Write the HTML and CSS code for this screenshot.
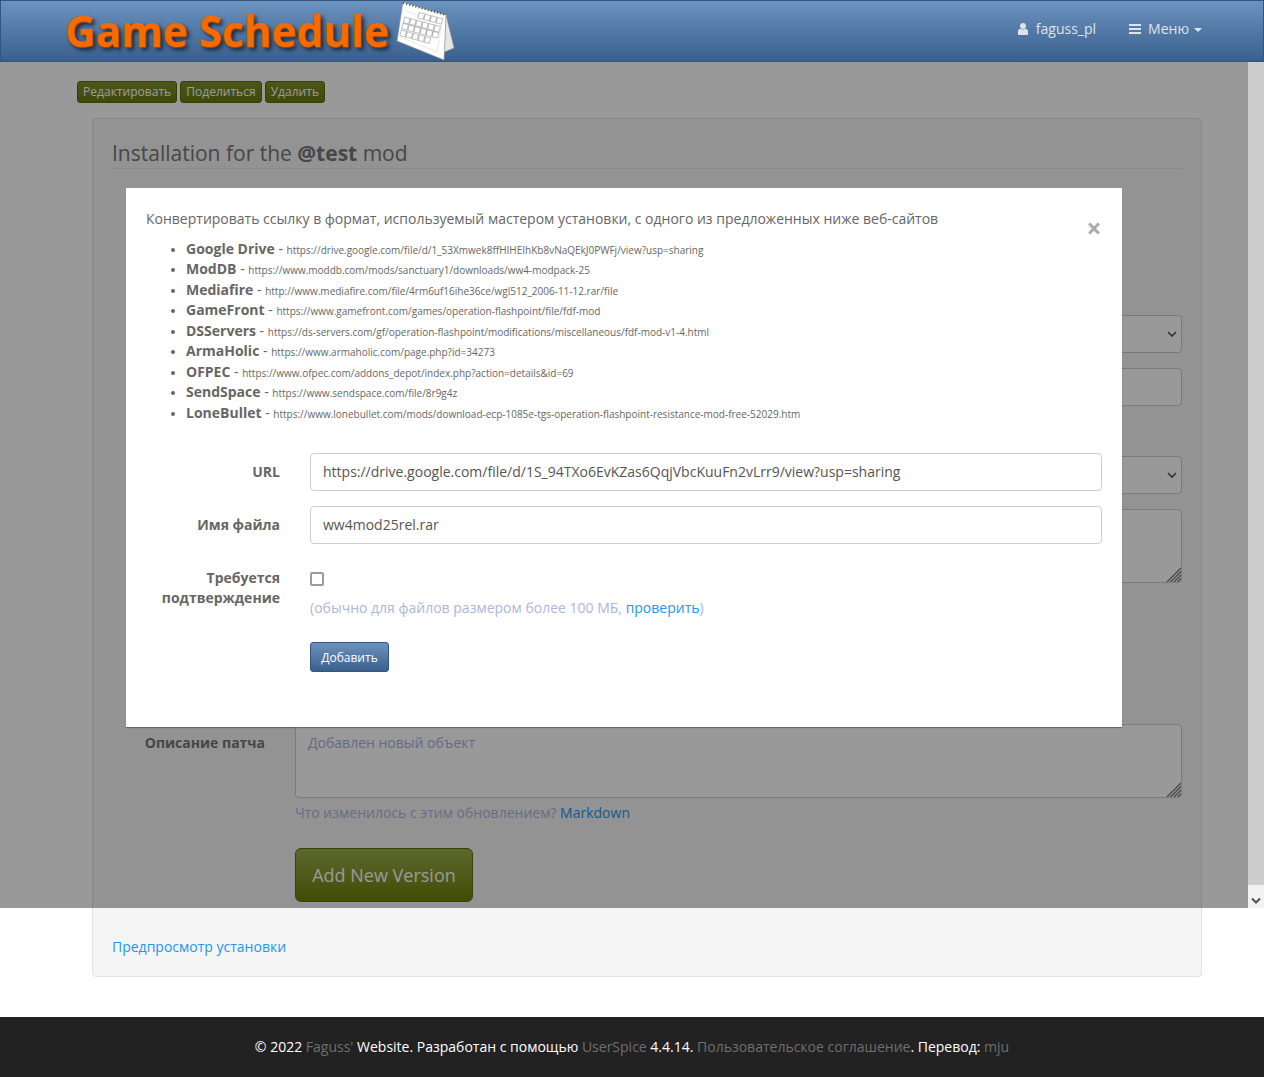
FILE: index.html
```html
<!DOCTYPE html>
<html lang="ru">
<head>
<meta charset="utf-8">
<title>Game Schedule</title>
<link rel="stylesheet" href="styles.css">
</head>
<body>
<header class="navbar">
  <a class="brand" href="#">
    <span class="brand-text">Game Schedule</span>
    <svg class="brand-cal" width="60" height="60" viewBox="0 0 60 60">
      <defs>
        <pattern id="cells" width="6.3" height="6.5" patternUnits="userSpaceOnUse">
          <rect x="0.5" y="0.5" width="5.3" height="5.5" fill="#fff" stroke="#a8a8a8" stroke-width=".7"/>
        </pattern>
      </defs>
      <path d="M50 13 L58 46 L48 50 Z" fill="#e6e6e6" stroke="#9a9a9a" stroke-width=".6"/>
      <path d="M7 0 L50 13 L48 58 L1 39 Z" fill="#fff" stroke="#8d8d8d" stroke-width=".6"/>
      <path d="M7 1 L50 13" stroke="#555" stroke-width="2" stroke-dasharray="1.200 2" fill="none"/>
      <path d="M9 9 L46 20 L41 50 L4 35" fill="none" stroke="#d0d0d0" stroke-width=".5"/>
      <rect width="25.200" height="6.500" fill="url(#cells)" transform="translate(23 10) rotate(15)"/>
      <rect width="37.800" height="13" fill="url(#cells)" transform="translate(8.500 14.500) rotate(15)"/>
      <rect width="31.500" height="6.500" fill="url(#cells)" transform="translate(5 27.500) rotate(15)"/>
    </svg>
  </a>
  <nav class="nav-right">
    <a class="nav-link" href="#">
      <svg class="nav-icon" width="10" height="12" viewBox="0 0 10 12"><circle cx="5" cy="3" r="3" fill="#dfe4ea"/><path d="M0 11 V8.500 C0 6.800 1 6 2.500 5.700 C3.800 6.700 6.200 6.700 7.500 5.700 C9 6 10 6.800 10 8.500 V11 C10 11.600 9.500 12 9 12 H1 C.5 12 0 11.600 0 11 Z" fill="#dfe4ea"/></svg>
      faguss_pl
    </a>
    <a class="nav-link nav-menu" href="#">
      <svg class="nav-icon" width="12" height="10" viewBox="0 0 12 10"><path d="M0 0H12V2H0ZM0 4H12V6H0ZM0 8H12V10H0Z" fill="#dfe4ea"/></svg>
      Меню
      <span class="caret"></span>
    </a>
  </nav>
</header>

<main class="container">
  <div class="actions">
    <a class="btn-olive" href="#">Редактировать</a>
    <a class="btn-olive" href="#">Поделиться</a>
    <a class="btn-olive" href="#">Удалить</a>
  </div>

  <section class="well">
    <h2 class="well-title">Installation for the <b>@test</b> mod</h2>

    <div class="row row-a"><div class="row-label"></div><select class="field"><option></option></select></div>
    <div class="row row-b"><div class="row-label"></div><input class="field" type="text"></div>
    <div class="row row-c"><div class="row-label"></div><select class="field"><option></option></select></div>
    <div class="row row-b"><div class="row-label"></div><textarea class="field area"></textarea></div>
    <div class="row row-d">
      <label class="row-label">Описание патча</label>
      <textarea class="field area" placeholder="Добавлен новый объект"></textarea>
    </div>
    <div class="row row-help"><div class="row-label"></div><p class="help">Что изменилось с этим обновлением? <a class="help-link" href="#">Markdown</a></p></div>
    <div class="row row-submit"><div class="row-label"></div><button class="btn-add" type="button">Add New Version</button></div>

    <a class="preview" href="#">Предпросмотр установки</a>
  </section>
</main>

<footer class="footer">
  <p>© 2022 <a href="#">Faguss'</a> Website. Разработан с помощью <a href="#">UserSpice</a> 4.4.14. <a href="#">Пользовательское соглашение</a>. Перевод: <a href="#">mju</a></p>
</footer>

<div class="backdrop"></div>
<div class="scrollbar">
  <svg class="scroll-arrow" width="10" height="7" viewBox="0 0 10 7"><path d="M1 1.500 L5 5.500 L9 1.500" fill="none" stroke="#505050" stroke-width="2"/></svg>
</div>

<div class="modal">
  <button class="close" type="button">×</button>
  <p class="modal-lead">Конвертировать ссылку в формат, используемый мастером установки, с одного из предложенных ниже веб-сайтов</p>
  <ul class="sites">
    <li><b>Google Drive</b><span class="dash"> - </span><small>https://drive.google.com/file/d/1_53Xmwek8ffHIHEIhKb8vNaQEkJ0PWFj/view?usp=sharing</small></li>
    <li><b>ModDB</b><span class="dash"> - </span><small>https://www.moddb.com/mods/sanctuary1/downloads/ww4-modpack-25</small></li>
    <li><b>Mediafire</b><span class="dash"> - </span><small>http://www.mediafire.com/file/4rm6uf16ihe36ce/wgl512_2006-11-12.rar/file</small></li>
    <li><b>GameFront</b><span class="dash"> - </span><small>https://www.gamefront.com/games/operation-flashpoint/file/fdf-mod</small></li>
    <li><b>DSServers</b><span class="dash"> - </span><small>https://ds-servers.com/gf/operation-flashpoint/modifications/miscellaneous/fdf-mod-v1-4.html</small></li>
    <li><b>ArmaHolic</b><span class="dash"> - </span><small>https://www.armaholic.com/page.php?id=34273</small></li>
    <li><b>OFPEC</b><span class="dash"> - </span><small>https://www.ofpec.com/addons_depot/index.php?action=details&amp;id=69</small></li>
    <li><b>SendSpace</b><span class="dash"> - </span><small>https://www.sendspace.com/file/8r9g4z</small></li>
    <li><b>LoneBullet</b><span class="dash"> - </span><small>https://www.lonebullet.com/mods/download-ecp-1085e-tgs-operation-flashpoint-resistance-mod-free-52029.htm</small></li>
  </ul>
  <form class="modal-form">
    <label class="m-label">URL</label>
    <input class="m-input" type="text" value="https://drive.google.com/file/d/1S_94TXo6EvKZas6QqjVbcKuuFn2vLrr9/view?usp=sharing">
    <label class="m-label">Имя файла</label>
    <input class="m-input" type="text" value="ww4mod25rel.rar">
    <label class="m-label m-label-confirm">Требуется подтверждение</label>
    <div class="m-confirm">
      <input class="m-check" type="checkbox">
      <p class="m-help">(обычно для файлов размером более 100 МБ, <a class="m-link" href="#">проверить</a>)</p>
    </div>
    <div></div>
    <div><button class="btn-blue" type="button">Добавить</button></div>
  </form>
</div>
</body>
</html>
```

FILE: styles.css
```css
* { box-sizing: border-box; }

html, body { margin: 0; padding: 0; }

body {
  font-family: "Open Sans", "Noto Sans", sans-serif;
  font-size: 14px;
  line-height: 20px;
  color: #666;
  background: #fff;
}

a { text-decoration: none; }

/* navbar */
.navbar {
  position: relative;
  z-index: 30;
  display: flex;
  justify-content: space-between;
  align-items: center;
  height: 62px;
  padding: 0 60px 0 64px;
  background: linear-gradient(#6b93c0, #3a5f8d);
  border: 1px solid #34557f;
}

.brand { display: flex; align-items: center; height: 60px; }

.brand-text {
  font-size: 42.3px;
  font-weight: 700;
  line-height: 60px;
  color: #f76a00;
  white-space: nowrap;
  text-shadow: 1px 1px 1px #a14a08, 3px 3px 4px #12233a;
}

.brand-cal { margin-left: 7px; margin-top: 1px; flex: none; }

.nav-right { display: flex; align-items: center; margin-top: -5px; }

.nav-link {
  display: flex;
  align-items: center;
  color: #dfe4ea;
  font-size: 14px;
}

.nav-icon { margin-right: 8px; }

.nav-menu { margin-left: 33px; }

.nav-menu .nav-icon { margin-right: 7px; }

.caret {
  margin-left: 5px;
  margin-right: 1px;
  margin-top: 2px;
  border-left: 4px solid transparent;
  border-right: 4px solid transparent;
  border-top: 4px solid #dfe4ea;
}

/* page */
.container { padding: 19px 62px 0 77px; }

.actions { display: flex; gap: 3px; }

.btn-olive {
  display: block;
  height: 22px;
  padding: 0 5px;
  font-size: 12.05px;
  line-height: 20px;
  color: #fff;
  background: linear-gradient(#7f902b, #69790e);
  border: 1px solid #5c6a08;
  border-radius: 3px;
}

.well {
  width: 1110px;
  height: 859px;
  margin: 15px 0 0 15px;
  padding: 19px;
  background: #f5f5f5;
  border: 1px solid #e3e3e3;
  border-radius: 4px;
}

.well-title {
  margin: 0;
  height: 31px;
  font-size: 21px;
  font-weight: 400;
  line-height: 30px;
  color: #777;
  border-bottom: 1px solid #e5e5e5;
}

.row { display: flex; }

.row-a { margin-top: 146px; }
.row-b { margin-top: 15px; }
.row-c { margin-top: 50px; }
.row-d { margin-top: 141px; }
.row-help { margin-top: 5px; }
.row-submit { margin-top: 25px; }

.row-label {
  flex: none;
  width: 153px;
  margin-right: 30px;
  padding-top: 9px;
  font-weight: 700;
  text-align: right;
  color: #777;
}

.field {
  display: block;
  width: 887px;
  height: 38px;
  padding: 8px 12px;
  font: inherit;
  color: #555;
  background: #fff;
  border: 1px solid #ccc;
  border-radius: 4px;
}

select.field {
  appearance: none;
  background: #fff url("data:image/svg+xml,%3Csvg xmlns='http://www.w3.org/2000/svg' width='10' height='7'%3E%3Cpath d='M1 1l4 4 4-4' fill='none' stroke='%23555' stroke-width='1.600'/%3E%3C/svg%3E") no-repeat right 4px center;
}

.area { height: 74px; }

.area::placeholder { color: #a9b0dd; opacity: 1; }

.area::-webkit-resizer {
  background: url("data:image/svg+xml,%3Csvg xmlns='http://www.w3.org/2000/svg' width='15' height='15'%3E%3Cpath d='M1 15L15 1M4.500 15L15 4.500M8 15L15 8M11.500 15L15 11.500' stroke='%23777' stroke-width='1.300'/%3E%3C/svg%3E") no-repeat;
}

.help { margin: 0; color: #adb5e0; line-height: 20px; }

.help-link { color: #2196f3; }

.btn-add {
  width: 178px;
  height: 54px;
  padding: 0;
  font: inherit;
  font-size: 18px;
  color: #fff;
  background: linear-gradient(#9aae4c, #6e7f08);
  border: 1px solid #5f6e08;
  border-radius: 6px;
}

.preview {
  display: block;
  margin-top: 35px;
  color: #2196f3;
}

/* footer */
.footer {
  height: 60px;
  margin-top: 40px;
  background: #222;
  color: #fff;
  text-align: center;
  line-height: 60px;
}

.footer p { margin: 0; }

.footer a { color: #6e6e6e; }

/* overlay layer */
.backdrop {
  position: absolute;
  z-index: 10;
  left: 0;
  top: 0;
  width: 1248px;
  height: 908px;
  background: rgba(0, 0, 0, .4);
}

.scrollbar {
  position: absolute;
  z-index: 11;
  left: 1248px;
  top: 0;
  width: 16px;
  height: 908px;
  background: linear-gradient(#cdcdcd 885px, #f1f1f1 885px);
}

.scroll-arrow {
  position: absolute;
  left: 3px;
  bottom: 4px;
}

.modal {
  position: absolute;
  z-index: 20;
  left: 126px;
  top: 188px;
  width: 996px;
  height: 539px;
  padding: 21px 20px 20px;
  background: #fff;
  box-shadow: 0 1px 1px rgba(0, 0, 0, .3);
}

.close {
  position: absolute;
  right: 20px;
  top: 25px;
  width: 16px;
  height: 30px;
  padding: 0;
  font-family: "Open Sans", sans-serif;
  font-size: 26px;
  font-weight: 700;
  line-height: 30px;
  color: #aaa;
  background: none;
  border: 0;
}

.modal-lead { margin: 0; }

.sites {
  margin: 9.75px 0 0;
  padding: 0 0 0 40px;
  list-style: disc;
}

.sites li { height: 20.5px; line-height: 20.5px; font-size: 12px; }

.sites b { font-size: 14px; }

.sites .dash { font-size: 14px; }

.sites small { font-size: 10px; }

.modal-form {
  display: grid;
  grid-template-columns: 134px 792px;
  column-gap: 30px;
  row-gap: 15px;
  margin-top: 29.25px;
}

.m-label {
  padding-top: 9px;
  font-weight: 700;
  text-align: right;
}

.m-input {
  display: block;
  width: 792px;
  height: 38px;
  padding: 8px 12px;
  font: inherit;
  color: #555;
  background: #fff;
  border: 1px solid #ccc;
  border-radius: 4px;
}

.m-confirm { padding-top: 6px; }

.m-check {
  appearance: none;
  display: block;
  width: 14px;
  height: 14px;
  margin: 7px 0 0 0;
  background: #fff;
  border: 2px solid #9a9aa8;
  border-radius: 2px;
}

.m-help { margin: 12px 0 0; color: #adb5e0; }

.m-link { color: #2196f3; }

.btn-blue {
  display: block;
  width: 79px;
  height: 30px;
  margin-top: 9px;
  padding: 2px 0 0;
  font: inherit;
  font-size: 12px;
  color: #fff;
  background: linear-gradient(#6b93c0, #3a5f8d);
  border: 1px solid #34557f;
  border-radius: 3px;
}
```
